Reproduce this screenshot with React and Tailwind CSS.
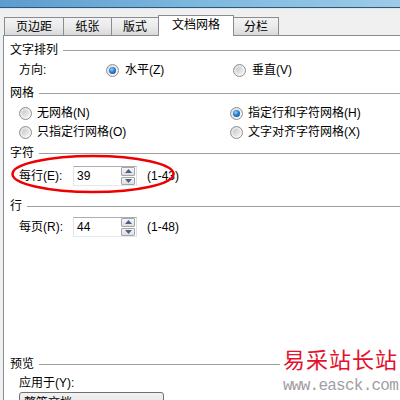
import React from "react";

const FONT = { fontFamily: '"Liberation Sans", "Noto Sans CJK SC", sans-serif' };

function Radio({ checked }) {
  return (
    <span className="relative inline-flex h-[13px] w-[13px] shrink-0 items-center justify-center rounded-full border border-[#8f8f8f] bg-gradient-to-br from-[#dcdcdc] to-[#fbfbfb]">
      {checked ? (
        <span className="h-[7px] w-[7px] rounded-full bg-[radial-gradient(circle_at_40%_35%,#8fd0ff_0%,#2b7fcf_45%,#0b3f7a_100%)]" />
      ) : (
        <span className="h-[7px] w-[7px] rounded-full bg-gradient-to-br from-[#c8c8c8] to-[#f2f2f2]" />
      )}
    </span>
  );
}

function Header({ text, mt }) {
  return (
    <div className={`flex h-[16px] shrink-0 items-center pl-[6px] ${mt}`}>
      <span className="text-[12px] leading-[16px] text-black">{text}</span>
      <span className="ml-[5px] h-px flex-1 bg-[#a0a0a0]" />
    </div>
  );
}

function Spin({ value }) {
  return (
    <div className="flex h-[20px] w-[64px] items-center border border-[#abadb3] border-r-[#dbdfe6] border-b-[#e3e9ef] border-l-[#e2e3ea] bg-white pl-[3px] pr-px">
      <span className="flex-1 text-[12px] leading-[16px] text-black">{value}</span>
      <div className="flex h-[18px] w-[14px] flex-col gap-px">
        <div className="flex flex-1 items-center justify-center rounded-[1px] border border-[#a5a5a5] bg-gradient-to-b from-[#f6f6f6] to-[#dedede]">
          <svg width="7" height="4" viewBox="0 0 7 4"><path d="M0 4 L3.5 0 L7 4 Z" fill="#4a5f8a" /></svg>
        </div>
        <div className="flex flex-1 items-center justify-center rounded-[1px] border border-[#a5a5a5] bg-gradient-to-b from-[#f6f6f6] to-[#dedede]">
          <svg width="7" height="4" viewBox="0 0 7 4"><path d="M0 0 L3.5 4 L7 0 Z" fill="#4a5f8a" /></svg>
        </div>
      </div>
    </div>
  );
}

function Tab({ label, w, active, first }) {
  if (active) {
    return (
      <div className={`relative z-10 -mb-px -ml-px flex h-[21px] ${w} items-start justify-center border border-b-0 border-[#898c95] bg-white pt-[1px] text-[12px] leading-[16px] text-black`}>
        {label}
      </div>
    );
  }
  return (
    <div className={`${first ? "" : "-ml-px"} flex h-[18px] ${w} items-center justify-center border border-b-0 border-[#898c95] bg-gradient-to-b from-[#f3f3f3] via-[#ebebeb] to-[#d9d9d9] text-[12px] leading-[16px] text-black`}>
      {label}
    </div>
  );
}

export default function App() {
  return (
    <div className="relative flex h-[400px] w-[400px] flex-col overflow-hidden bg-[#f0f0f0]" style={FONT}>
      <div className="h-[7px] shrink-0 bg-gradient-to-r from-[#5d9ccf] via-[#7db8df] to-[#9ccbe7]" />
      <div className="h-px shrink-0 bg-[#2f5874]" />
      <div className="h-px shrink-0 bg-[#d8e6f0]" />
      <div className="flex h-[26px] shrink-0 items-end pl-[4px]">
        <Tab label="页边距" w="w-[60px]" first />
        <Tab label="纸张" w="w-[49px]" />
        <Tab label="版式" w="w-[48px]" />
        <Tab label="文档网格" w="w-[76px]" active />
        <Tab label="分栏" w="w-[46px]" />
      </div>
      <div className="ml-[3px] flex shrink-0 flex-col border-l border-t border-[#898c95] bg-white pb-[20px] pt-[6px]">
        <Header text="文字排列" mt="" />
        <div className="mt-[4px] flex h-[16px] items-center pl-[15px] text-[12px] leading-[16px]">
          <span className="w-[87px]">方向:</span>
          <div className="flex w-[127px] items-center gap-[6px]">
            <Radio checked />
            <span>水平(Z)</span>
          </div>
          <div className="flex items-center gap-[6px]">
            <Radio />
            <span>垂直(V)</span>
          </div>
        </div>
        <Header text="网格" mt="mt-[7px]" />
        <div className="mt-[4px] flex h-[16px] items-center pl-[15px] text-[12px] leading-[16px]">
          <div className="flex w-[211px] items-center gap-[5px]">
            <Radio />
            <span>无网格(N)</span>
          </div>
          <div className="flex items-center gap-[5px]">
            <Radio checked />
            <span>指定行和字符网格(H)</span>
          </div>
        </div>
        <div className="mt-[3px] flex h-[16px] items-center pl-[15px] text-[12px] leading-[16px]">
          <div className="flex w-[211px] items-center gap-[5px]">
            <Radio />
            <span>只指定行网格(O)</span>
          </div>
          <div className="flex items-center gap-[5px]">
            <Radio />
            <span>文字对齐字符网格(X)</span>
          </div>
        </div>
        <Header text="字符" mt="mt-[5px]" />
        <div className="mt-[5px] flex h-[20px] items-center pl-[15px] text-[12px] leading-[16px]">
          <span className="w-[54px]">每行(E):</span>
          <Spin value="39" />
          <span className="ml-[10px]">(1-43)</span>
        </div>
        <Header text="行" mt="mt-[12px]" />
        <div className="mt-[3px] flex h-[20px] items-center pl-[15px] text-[12px] leading-[16px]">
          <span className="w-[54px]">每页(R):</span>
          <Spin value="44" />
          <span className="ml-[10px]">(1-48)</span>
        </div>
        <Header text="预览" mt="mt-[119px]" />
        <div className="mt-[3px] flex h-[16px] items-center pl-[15px] text-[12px] leading-[16px]">
          应用于(Y):
        </div>
        <div className="ml-[15px] mt-[1px] flex h-[21px] w-[145px] items-center rounded-[3px] border border-[#707070] bg-gradient-to-b from-[#f2f2f2] to-[#dcdcdc] pl-[4px] pr-[6px] text-[12px] leading-[16px]">
          <span className="flex-1">整篇文档</span>
          <svg width="8" height="5" viewBox="0 0 8 5"><path d="M0 0 L4 5 L8 0 Z" fill="#000" /></svg>
        </div>
      </div>

      <svg className="absolute left-[10px] top-[154px]" width="166" height="42" viewBox="0 0 166 42">
        <ellipse cx="83" cy="20" rx="80.5" ry="18" fill="none" stroke="#ee0000" strokeWidth="2.5" />
      </svg>

      <div className="absolute left-[280px] top-[344px] flex w-[120px] flex-col bg-white pl-[3px]">
        <span className="text-[22px] leading-[28px] tracking-[1px] text-[#e5102b]" style={{ fontFamily: '"Noto Sans CJK SC", sans-serif' }}>
          易采站长站
        </span>
        <span className="mt-[4px] text-[16px] leading-[20px] tracking-[-0.75px] text-[#a39ca2]" style={{ fontFamily: '"Liberation Mono", monospace' }}>
          www.easck.com
        </span>
      </div>
    </div>
  );
}
